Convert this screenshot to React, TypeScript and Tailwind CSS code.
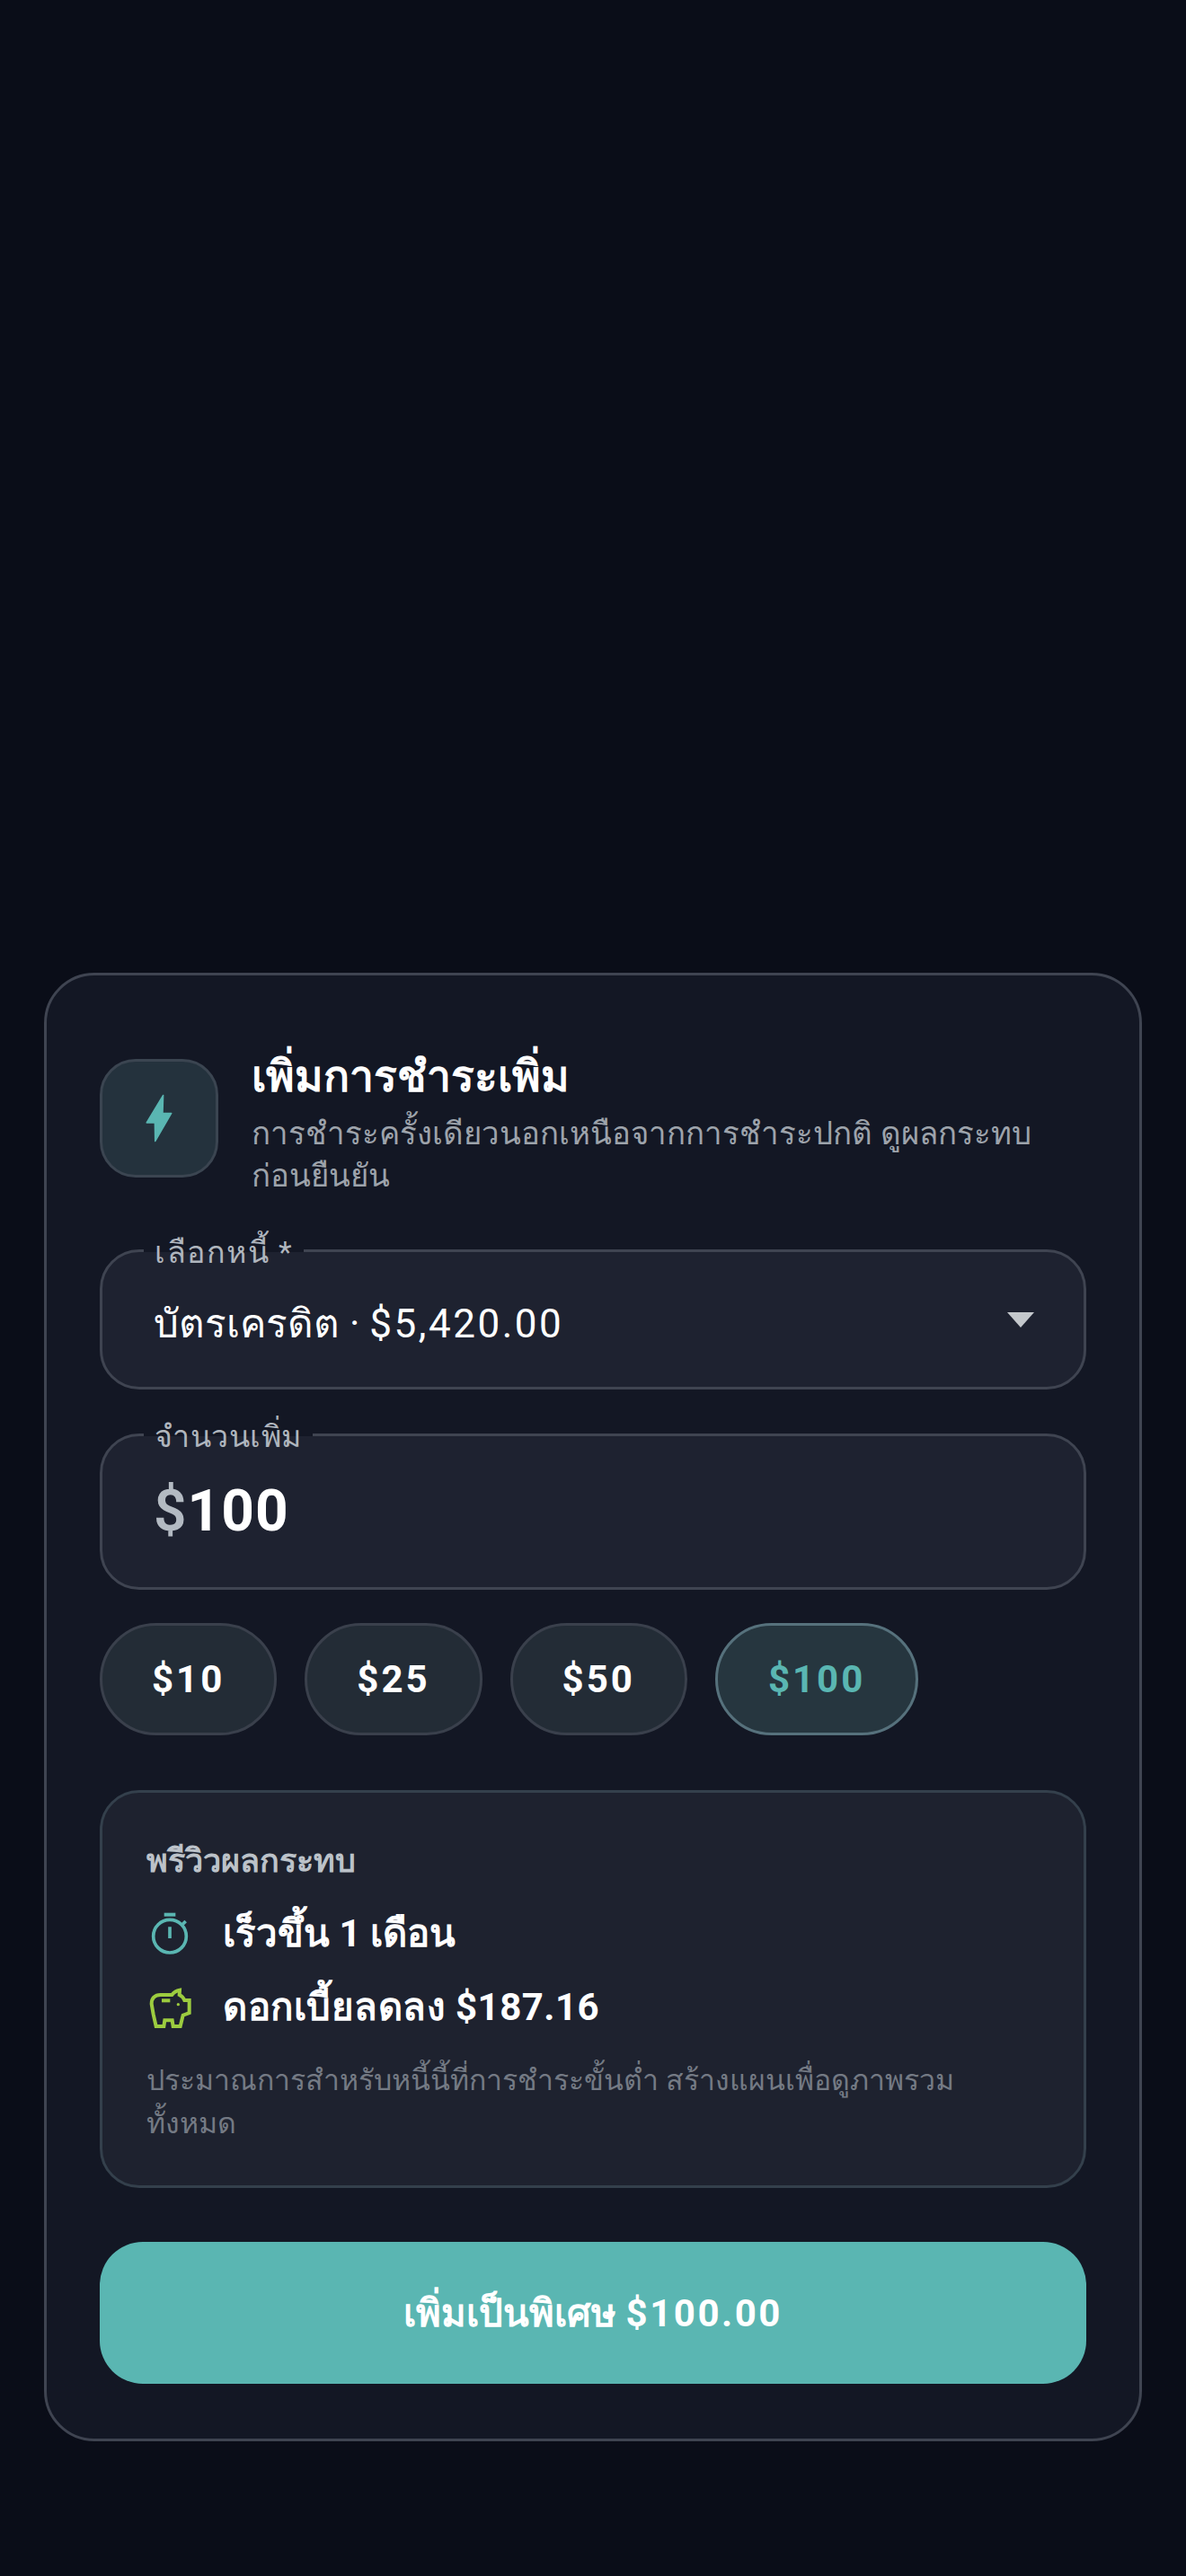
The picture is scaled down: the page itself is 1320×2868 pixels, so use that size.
const LABEL_BG = "bg-[linear-gradient(to_bottom,#131724_50%,#1e2230_50%)]";

function Chip({ label, active }: { label: string; active?: boolean }) {
  return (
    <button
      className={
        active
          ? "h-[125px] rounded-full border-[3px] border-[#56717c] bg-[#26363f] px-[56px] text-[42px] font-bold tracking-[3px] text-[#5ab6b2]"
          : "h-[125px] rounded-full border-[3px] border-[#3a404c] bg-[#232c36] px-[55px] text-[42px] font-bold tracking-[3px] text-white"
      }
    >
      {label}
    </button>
  );
}

function Bolt() {
  return (
    <svg width="30" height="54" viewBox="185 143 92 164" fill="#5ab6b2" stroke="#5ab6b2" strokeWidth="5" strokeLinejoin="round">
      <path d="M245 147 243 208h30l-55 95-1-63h-28z" />
    </svg>
  );
}

function Timer() {
  return (
    <svg width="52" height="52" viewBox="69 72 156 156" fill="none" stroke="#5ab6b2" strokeWidth="11">
      <path d="M128 86h38" strokeWidth="12" />
      <circle cx="147" cy="158" r="55" />
      <path d="M147 127v38M187 121l13-13" />
    </svg>
  );
}

function Piggy() {
  return (
    <svg width="52" height="52" viewBox="39 44 156 156" fill="none" stroke="#9ccc3f" strokeWidth="12">
      <path d="M56 110c0-18 10-30 30-30h38c6-8 14-14 26-16l-1 16c8 4 14 10 17 18h16v42l-21 8-9 37h-24l-3-20h-25l-3 20H71l-9-40z" />
      <path d="M90 99h28" />
      <circle cx="145" cy="112" r="5" fill="#9ccc3f" stroke="none" />
    </svg>
  );
}

export default function App() {
  return (
    <div lang="th" className="flex h-[2868px] w-[1320px] flex-col justify-end bg-[#0a0d18] px-[49px] pb-[150px] font-['Roboto','Noto_Sans',sans-serif]">
      <div className="flex flex-col rounded-[56px] border-[3px] border-[#3f4451] bg-[#131724] px-[59px] pt-[59px] pb-[61px]">
        <div className="flex gap-[37px] pt-[34px]">
          <div className="flex h-[132px] w-[132px] shrink-0 items-center justify-center rounded-[40px] border-[3px] border-[#3b4551] bg-[#24323d]">
            <Bolt />
          </div>
          <div className="-mt-[8px]">
            <h1 className="text-[48px] leading-[56px] font-bold text-white">เพิ่มการชำระเพิ่ม</h1>
            <p className="mt-[12px] text-[34.8px] leading-[47px] text-[#9da3ab]">
              การชำระครั้งเดียวนอกเหนือจากการชำระปกติ ดูผลกระทบก่อนยืนยัน
            </p>
          </div>
        </div>

        <div className="relative mt-[58px] flex h-[156px] items-center justify-between rounded-[44px] border-[3px] border-[#3f4451] bg-[#1e2230] pr-[55px] pl-[57px]">
          <span className={`absolute top-[-20px] left-[46px] px-[12px] text-[34px] leading-[40px] tracking-[1.5px] text-[#afb5bd] ${LABEL_BG}`}>เลือกหนี้ *</span>
          <span className="pt-[10px] text-[44px] text-white">บัตรเครดิต · <span className="tracking-[2.5px]">$5,420.00</span></span>
          <span className="h-0 w-0 border-x-[15px] border-t-[17px] border-x-transparent border-t-[#c4c8cc]" />
        </div>

        <div className="relative mt-[49px] flex h-[174px] items-center rounded-[44px] border-[3px] border-[#3f4451] bg-[#1e2230] px-[57px]">
          <span className={`absolute top-[-20px] left-[46px] px-[12px] text-[34px] leading-[40px] tracking-[0.5px] text-[#afb5bd] ${LABEL_BG}`}>จำนวนเพิ่ม</span>
          <span className="text-[64px] font-bold tracking-[1px] text-white"><span className="font-semibold text-[#b3bac2]">$</span>100</span>
        </div>

        <div className="mt-[37px] flex gap-[31px]">
          <Chip label="$10" />
          <Chip label="$25" />
          <Chip label="$50" />
          <Chip label="$100" active />
        </div>

        <div className="mt-[61px] rounded-[44px] border-[3px] border-[#34404c] bg-[#1e222f] pt-[54px] pr-[48px] pb-[45px] pl-[49px]">
          <div className="text-[36px] leading-[44px] font-bold text-[#bcc2c9]">พรีวิวผลกระทบ</div>
          <div className="mt-[26px] flex items-center gap-[33px]">
            <Timer />
            <span className="text-[42px] leading-[66px] font-bold text-white">เร็วขึ้น 1 เดือน</span>
          </div>
          <div className="mt-[16px] flex items-center gap-[33px]">
            <Piggy />
            <span className="text-[42px] leading-[66px] font-bold tracking-[0.5px] text-white">ดอกเบี้ยลดลง $187.16</span>
          </div>
          <p className="mt-[24px] text-[32px] leading-[48px] text-[#747a84]">
            ประมาณการสำหรับหนี้นี้ที่การชำระขั้นต่ำ สร้างแผนเพื่อดูภาพรวมทั้งหมด
          </p>
        </div>

        <button className="mt-[60px] h-[158px] rounded-[48px] bg-[#5ab6b2] text-[42px] font-bold text-white">
          เพิ่มเป็นพิเศษ <span className="tracking-[2.5px]">$100.00</span>
        </button>
      </div>
    </div>
  );
}
